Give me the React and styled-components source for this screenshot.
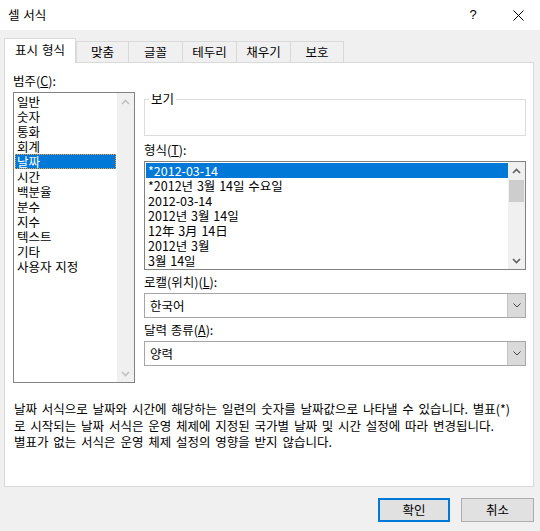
import React from 'react';
import styled, { createGlobalStyle } from 'styled-components';

const GlobalStyle = createGlobalStyle`
  html, body { margin: 0; padding: 0; }
  body {
    font-family: "Noto Sans CJK KR", "Noto Sans", sans-serif;
    font-size: 12.5px;
    word-spacing: 1px;
    color: #000;
    background: #f0f0f0;
  }
`;

const categories = ['일반', '숫자', '통화', '회계', '날짜', '시간', '백분율', '분수', '지수', '텍스트', '기타', '사용자 지정'];
const formats = ['*2012-03-14', '*2012년 3월 14일 수요일', '2012-03-14', '2012년 3월 14일', '12年 3月 14日', '2012년 3월', '3월 14일'];
const tabs = [
    { label: '표시 형식', w: 72 },
    { label: '맞춤', w: 53 },
    { label: '글꼴', w: 55 },
    { label: '테두리', w: 55 },
    { label: '채우기', w: 55 },
    { label: '보호', w: 54 },
];

const Chevron = ({ up, color = '#606060' }) => (
    <svg width="9" height="6" viewBox="0 0 9 6">
        <polyline
            points={up ? '1,5 4.5,1.5 8,5' : '1,1 4.5,4.5 8,1'}
            fill="none"
            stroke={color}
            strokeWidth="1.6"
        />
    </svg>
);

const SmallChevron = () => (
    <svg width="8" height="5" viewBox="0 0 8 5">
        <polyline points="0.5,0.5 4,4 7.5,0.5" fill="none" stroke="#444" strokeWidth="1" />
    </svg>
);

const App = () => {
    return (
        <Window>
            <GlobalStyle />
            <TitleBar>
                <Title>셀 서식</Title>
                <TitleButtons>
                    <Help>?</Help>
                    <CloseButton>
                        <svg width="11" height="11" viewBox="0 0 11 11">
                            <line x1="0.5" y1="0.5" x2="10.5" y2="10.5" stroke="#000" strokeWidth="1" />
                            <line x1="10.5" y1="0.5" x2="0.5" y2="10.5" stroke="#000" strokeWidth="1" />
                        </svg>
                    </CloseButton>
                </TitleButtons>
            </TitleBar>
            <Body>
                <TabStrip>
                    {tabs.map((t, i) => (
                        <Tab key={t.label} w={t.w} active={i === 0}>{t.label}</Tab>
                    ))}
                </TabStrip>
                <Panel>
                    <Columns>
                        <LeftColumn>
                            <FieldLabel>범주(<u>C</u>):</FieldLabel>
                            <CategoryList>
                                <Items>
                                    {categories.map((c, i) => (
                                        <CategoryItem key={c} selected={i === 4}>{c}</CategoryItem>
                                    ))}
                                </Items>
                                <ScrollBar>
                                    <ScrollArrow><Chevron up color="#c0c0c0" /></ScrollArrow>
                                    <Track />
                                    <ScrollArrow><Chevron color="#c0c0c0" /></ScrollArrow>
                                </ScrollBar>
                            </CategoryList>
                        </LeftColumn>
                        <RightColumn>
                            <Group>
                                <Legend>보기</Legend>
                            </Group>
                            <FieldLabel gap={6}>형식(<u>T</u>):</FieldLabel>
                            <FormatList>
                                <Items>
                                    {formats.map((f, i) => (
                                        <FormatItem key={f} selected={i === 0}>{f}</FormatItem>
                                    ))}
                                </Items>
                                <ScrollBar>
                                    <ScrollArrow><Chevron up /></ScrollArrow>
                                    <Track>
                                        <Thumb />
                                    </Track>
                                    <ScrollArrow><Chevron /></ScrollArrow>
                                </ScrollBar>
                            </FormatList>
                            <FieldLabel gap={4}>로캘(위치)(<u>L</u>):</FieldLabel>
                            <Combo>
                                <ComboValue>한국어</ComboValue>
                                <ComboButton><SmallChevron /></ComboButton>
                            </Combo>
                            <FieldLabel gap={4}>달력 종류(<u>A</u>):</FieldLabel>
                            <Combo>
                                <ComboValue>양력</ComboValue>
                                <ComboButton><SmallChevron /></ComboButton>
                            </Combo>
                        </RightColumn>
                    </Columns>
                    <Description>
                        날짜 서식으로 날짜와 시간에 해당하는 일련의 숫자를 날짜값으로 나타낼 수 있습니다. 별표(*)<br />
                        로 시작되는 날짜 서식은 운영 체제에 지정된 국가별 날짜 및 시간 설정에 따라 변경됩니다.<br />
                        별표가 없는 서식은 운영 체제 설정의 영향을 받지 않습니다.
                    </Description>
                </Panel>
                <ButtonRow>
                    <Button primary>확인</Button>
                    <Button>취소</Button>
                </ButtonRow>
            </Body>
        </Window>
    );
};

const Window = styled.div`
    width: 540px;
    height: 531px;
    background: #f0f0f0;
    display: flex;
    flex-direction: column;
    overflow: hidden;
`;
const TitleBar = styled.div`
    height: 30px;
    background: #fff;
    display: flex;
    align-items: center;
    justify-content: space-between;
    padding-left: 8px;
    box-sizing: border-box;
`;
const Title = styled.div`
    line-height: 16px;
`;
const TitleButtons = styled.div`
    display: flex;
    align-items: center;
    height: 100%;
`;
const Help = styled.div`
    width: 46px;
    text-align: center;
    font-size: 13px;
    font-family: "Liberation Sans", sans-serif;
    line-height: 30px;
`;
const CloseButton = styled.div`
    width: 44px;
    height: 30px;
    display: flex;
    align-items: center;
    justify-content: center;
`;
const Body = styled.div`
    padding: 8px 6px 0 4px;
    display: flex;
    flex-direction: column;
`;
const TabStrip = styled.div`
    display: flex;
    align-items: flex-end;
    height: 25px;
    margin-bottom: -1px;
    position: relative;
    z-index: 1;
`;
const Tab = styled.div`
    width: ${p => p.w}px;
    height: ${p => (p.active ? 25 : 22)}px;
    box-sizing: border-box;
    border: 1px solid #d9d9d9;
    border-bottom: ${p => (p.active ? 'none' : '1px solid #d9d9d9')};
    margin-left: ${p => (p.active ? 0 : -1)}px;
    background: ${p => (p.active ? '#fff' : '#f0f0f0')};
    display: flex;
    align-items: center;
    justify-content: center;
    padding-bottom: ${p => (p.active ? 2 : 0)}px;
    line-height: 16px;
    white-space: nowrap;
    &:nth-child(2) { margin-left: 0; }
`;
const Panel = styled.div`
    height: 425px;
    box-sizing: border-box;
    background: #fff;
    border: 1px solid #d9d9d9;
    padding: 10px 0 0 8px;
`;
const Columns = styled.div`
    display: flex;
    gap: 9px;
    align-items: flex-start;
`;
const LeftColumn = styled.div`
    width: 122px;
    display: flex;
    flex-direction: column;
`;
const RightColumn = styled.div`
    width: 382px;
    padding-top: 19px;
    display: flex;
    flex-direction: column;
`;
const FieldLabel = styled.div`
    line-height: 16px;
    height: 16px;
    margin-top: ${p => p.gap || 0}px;
    margin-bottom: 3px;
    white-space: nowrap;
    u { text-underline-offset: 1px; }
`;
const ListBox = styled.div`
    border: 1px solid #828282;
    box-sizing: border-box;
    display: flex;
    background: #fff;
`;
const CategoryList = styled(ListBox)`
    height: 291px;
`;
const FormatList = styled(ListBox)`
    height: 109px;
`;
const Items = styled.div`
    flex: 1;
    padding: 1px 0 0 1px;
    overflow: hidden;
`;
const Row = styled.div`
    height: 15px;
    line-height: 15px;
    padding-left: 2px;
    white-space: nowrap;
    box-sizing: border-box;
    background: ${p => (p.selected ? '#0078d7' : 'transparent')};
    color: ${p => (p.selected ? '#fff' : '#000')};
`;
const CategoryItem = styled(Row)`
    margin-right: 1px;
    border: 1px dotted ${p => (p.selected ? '#f3a03c' : 'transparent')};
    padding-left: 1px;
    line-height: 13px;
`;
const FormatItem = styled(Row)``;
const ScrollBar = styled.div`
    width: 17px;
    background: #f0f0f0;
    display: flex;
    flex-direction: column;
`;
const ScrollArrow = styled.div`
    height: 17px;
    display: flex;
    align-items: center;
    justify-content: center;
`;
const Track = styled.div`
    flex: 1;
    padding: 1px 1px 0;
`;
const Thumb = styled.div`
    height: 22px;
    background: #cdcdcd;
`;
const Group = styled.fieldset`
    margin: 0;
    padding: 0;
    height: 44px;
    box-sizing: border-box;
    border: 1px solid #dcdcdc;
`;
const Legend = styled.legend`
    padding: 0 2px;
    margin-left: 4px;
    line-height: 14px;
`;
const Combo = styled.div`
    height: 25px;
    box-sizing: border-box;
    border: 1px solid #a6a6a6;
    display: flex;
    background: #fff;
`;
const ComboValue = styled.div`
    flex: 1;
    padding-left: 5px;
    line-height: 23px;
`;
const ComboButton = styled.div`
    width: 17px;
    background: #dadada;
    border-left: 1px solid #c4c4c4;
    display: flex;
    align-items: center;
    justify-content: center;
`;
const Description = styled.div`
    margin-top: 18px;
    padding-left: 1px;
    line-height: 16.5px;
    word-spacing: 2px;
    white-space: nowrap;
`;
const ButtonRow = styled.div`
    display: flex;
    justify-content: flex-end;
    gap: 11px;
    margin-top: 11px;
`;
const Button = styled.div`
    width: ${p => (p.primary ? 72 : 73)}px;
    height: 24px;
    box-sizing: border-box;
    background: #e1e1e1;
    border: ${p => (p.primary ? '2px solid #0078d7' : '1px solid #adadad')};
    display: flex;
    align-items: center;
    justify-content: center;
    line-height: 16px;
`;

export default App;
